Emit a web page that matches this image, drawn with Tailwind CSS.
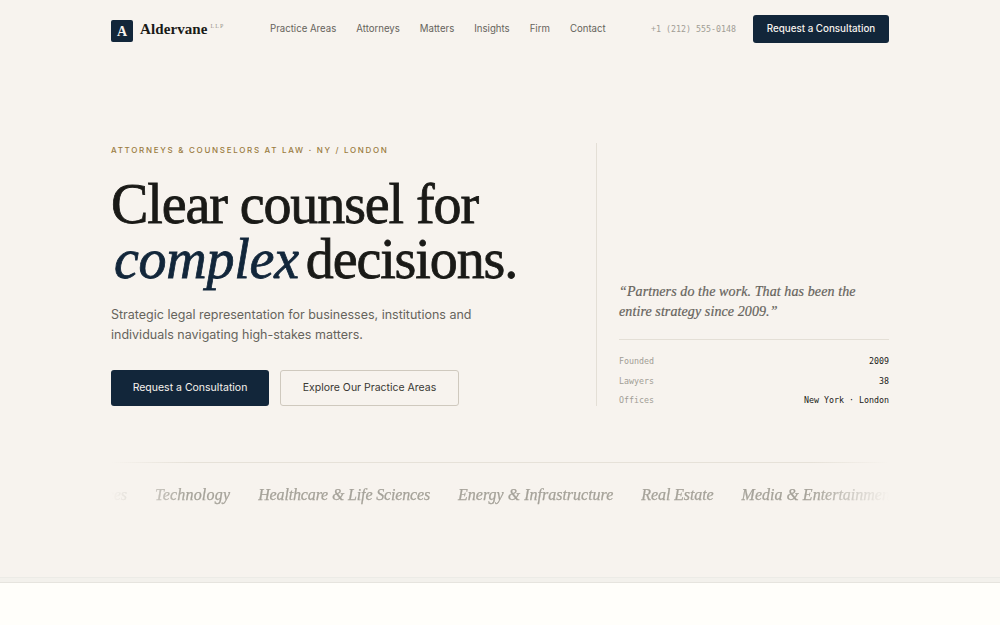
<!DOCTYPE html>
<html lang="en">
<head>
    <meta charset="UTF-8">
    <meta name="viewport" content="width=device-width, initial-scale=1.0">
    <title>Aldervane LLP</title>
    <script src="https://cdn.jsdelivr.net/npm/@tailwindcss/browser@4"></script>
</head>
<body class="bg-[#f7f3ee] font-['Inter',sans-serif] text-[#1a1a17] h-[625px] overflow-hidden">

    <!-- nav -->
    <header class="w-[778px] mx-auto h-[58px] flex items-center whitespace-nowrap">
        <a class="flex items-center w-[159px]">
            <span class="w-[22px] h-[22px] mt-[4px] rounded-[2px] bg-[#12263a] text-[#f7f3ee] flex items-center justify-center font-['Liberation_Serif',serif] font-bold text-[14px]">A</span>
            <span class="ml-[7px] font-['Liberation_Serif',serif] font-bold text-[15px] tracking-[0.1px] leading-none">Aldervane</span>
            <span class="ml-[3px] mb-[6px] font-['Liberation_Serif',serif] text-[6px] tracking-[1px] text-[#9a968e] leading-none">LLP</span>
        </a>
        <nav class="flex gap-[20px] text-[9.65px] text-[#66635c]">
            <a>Practice Areas</a>
            <a>Attorneys</a>
            <a>Matters</a>
            <a>Insights</a>
            <a>Firm</a>
            <a>Contact</a>
        </nav>
        <span class="ml-auto font-['DejaVu_Sans_Mono',monospace] text-[8.3px] text-[#a19d95]">+1 (212) 555-0148</span>
        <a class="ml-[17px] w-[136px] h-[28px] rounded-[3px] bg-[#12263a] text-[#f7f3ee] text-[9.8px] font-medium flex items-center justify-center">Request a Consultation</a>
    </header>

    <!-- hero -->
    <section class="w-[778px] mx-auto mt-[85px] h-[263px] flex">
        <div class="w-[486px] border-r border-[#e4dfd6] pt-[1px]">
            <p class="text-[8px] font-medium tracking-[1.7px] text-[#9a7b3f] leading-[12px]">ATTORNEYS &amp; COUNSELORS AT LAW · NY / LONDON</p>
            <h1 class="mt-[21px] font-['Liberation_Serif',serif] text-[56px] leading-[55px] tracking-[-1.1px] [-webkit-text-stroke:0.8px_#1a1a17]">Clear counsel for<br><em class="inline-block ml-[3px] mr-[-6px] tracking-[-0.25px] text-[#12263a] [-webkit-text-stroke:0.8px_#12263a]">complex</em> decisions.</h1>
            <p class="mt-[18px] text-[12.5px] leading-[20px] text-[#66635c]">Strategic legal representation for businesses, institutions and<br>individuals navigating high-stakes matters.</p>
            <div class="mt-[25px] flex gap-[11px]">
                <a class="w-[158px] h-[36px] rounded-[3px] bg-[#12263a] text-[#f7f3ee] text-[10.5px] flex items-center justify-center">Request a Consultation</a>
                <a class="w-[179px] h-[36px] rounded-[3px] border border-[#cfc9be] text-[#3a3833] text-[10.5px] flex items-center justify-center">Explore Our Practice Areas</a>
            </div>
        </div>
        <div class="flex-1 pl-[22px] flex flex-col justify-end">
            <p class="font-['Liberation_Serif',serif] italic text-[14px] tracking-[0.1px] leading-[20px] text-[#66635c] [-webkit-text-stroke:0.2px_#66635c]">“Partners do the work. That has been the<br>entire strategy since 2009.”</p>
            <dl class="mt-[17px] border-t border-[#e4dfd6] pt-[15px] font-['DejaVu_Sans_Mono',monospace] text-[8.3px] leading-[12px] flex flex-col gap-[7.5px]">
                <div class="flex justify-between"><dt class="text-[#a19d95]">Founded</dt><dd class="text-[#1a1a17]">2009</dd></div>
                <div class="flex justify-between"><dt class="text-[#a19d95]">Lawyers</dt><dd class="text-[#1a1a17]">38</dd></div>
                <div class="flex justify-between"><dt class="text-[#a19d95]">Offices</dt><dd class="text-[#1a1a17]">New York · London</dd></div>
            </dl>
        </div>
    </section>

    <!-- practice strip -->
    <section class="w-[778px] mx-auto mt-[56px]">
        <div class="h-px bg-[linear-gradient(to_right,transparent,#e6e1d8_10%,#e6e1d8_90%,transparent)]"></div>
        <div class="mt-[22px] h-[20px] overflow-hidden whitespace-nowrap flex gap-[28px] font-['Liberation_Serif',serif] italic text-[16px] leading-[20px] text-[#a5a299] [-webkit-text-stroke:0.25px_#a5a299] [mask-image:linear-gradient(to_right,transparent,black_10%,black_90%,transparent)]">
            <span class="w-[16px] shrink-0 flex justify-end">Financial Services</span>
            <span class="shrink-0 tracking-[0.2px]">Technology</span>
            <span class="shrink-0 tracking-[-0.15px]">Healthcare &amp; Life Sciences</span>
            <span class="shrink-0">Energy &amp; Infrastructure</span>
            <span class="shrink-0 tracking-[-0.1px]">Real Estate</span>
            <span class="shrink-0">Media &amp; Entertainment</span>
        </div>
    </section>

    <!-- next section -->
    <div class="mt-[72px] h-[5px] border-t border-[#ecebe6] bg-[#f3f1ec]"></div>
    <div class="h-[60px] border-t border-[#e6e4de] bg-[#fffefa]"></div>

</body>
</html>
